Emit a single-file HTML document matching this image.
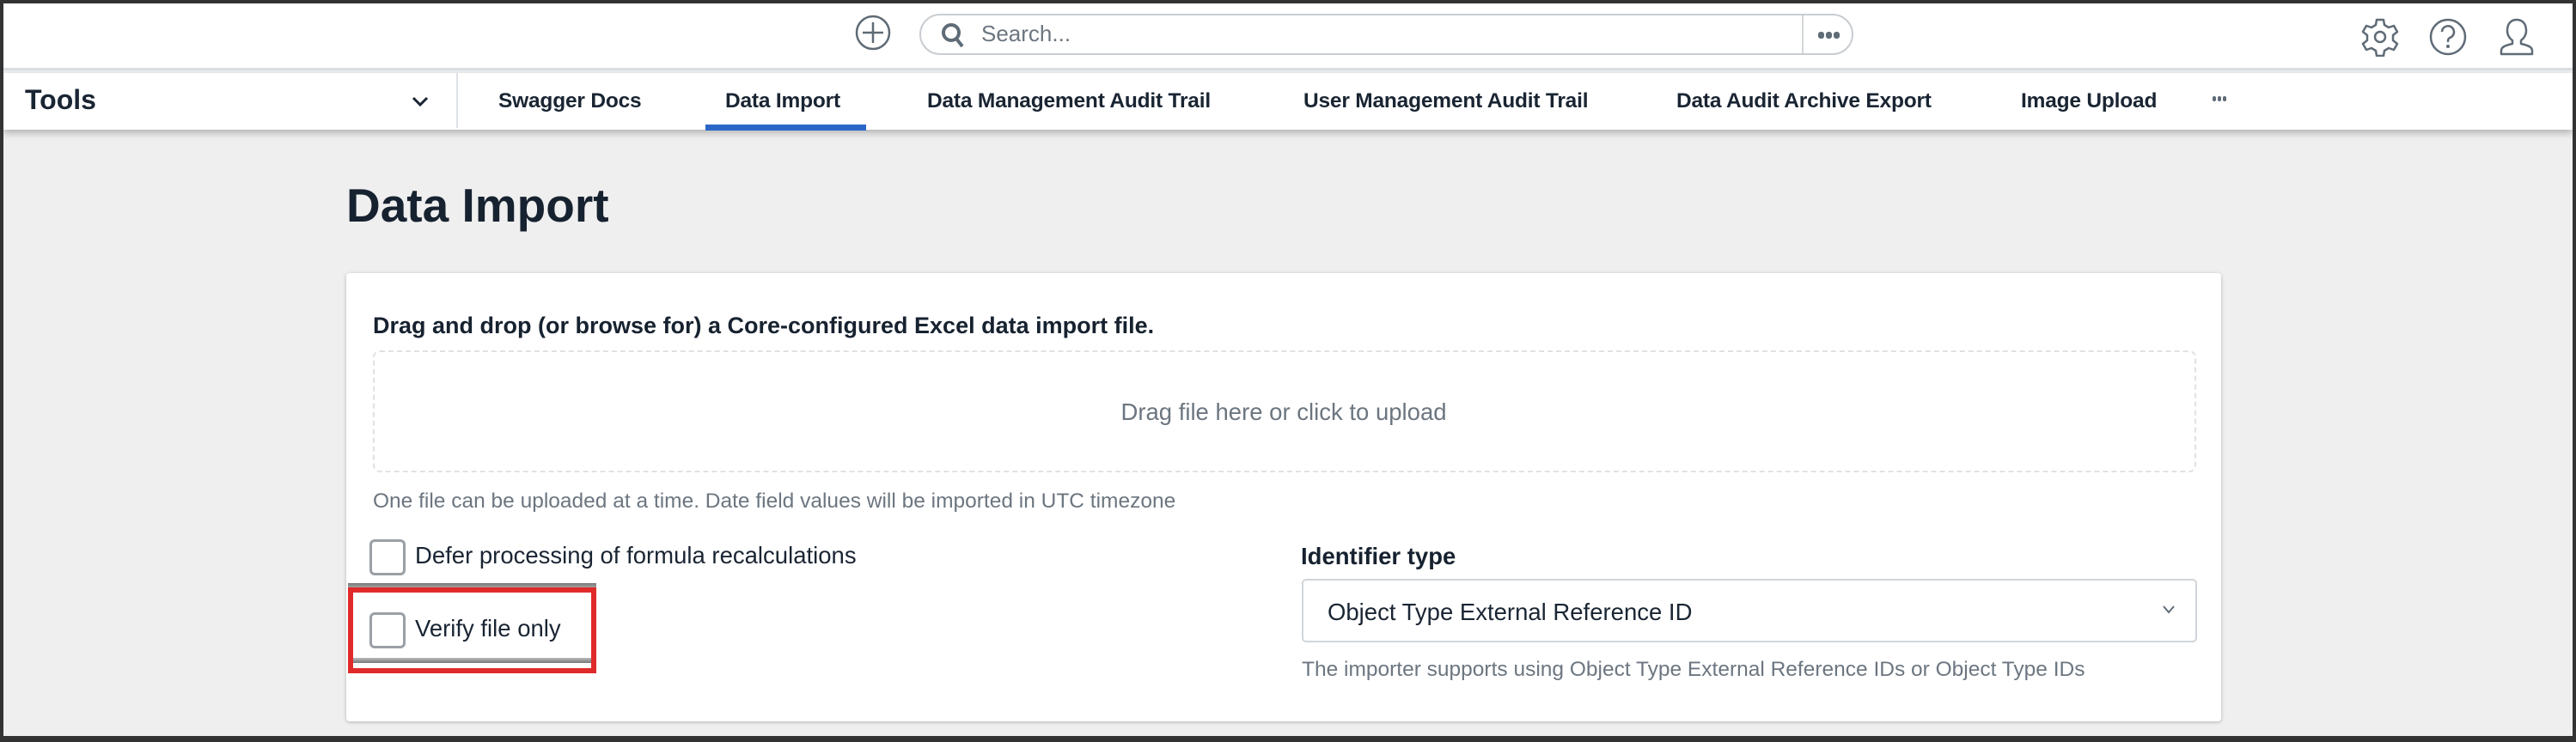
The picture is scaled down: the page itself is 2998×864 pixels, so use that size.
<!DOCTYPE html>
<html><head><meta charset="utf-8"><style>
*{box-sizing:border-box;margin:0;padding:0}
body{width:2998px;height:864px;overflow:hidden;background:#333;font-family:"Liberation Sans",sans-serif;color:#172230;position:relative}
#frame{position:absolute;left:4px;top:4px;width:2990px;height:853px;background:#efefef;overflow:hidden}
#top{position:absolute;left:0;top:0;width:100%;height:78px;background:#fff;border-bottom:3px solid #d9dee3}
#nav{position:absolute;left:0;top:81px;width:100%;height:66px;background:#fff;box-shadow:0 4px 8px rgba(0,0,0,.25)}
.abs{position:absolute}
.tab{position:absolute;top:19px;font-size:24.5px;font-weight:bold;color:#1a2533;letter-spacing:-0.2px}
.card{position:absolute;left:399px;top:314px;width:2182px;height:522px;background:#fff;border-radius:4px;box-shadow:0 1px 4px rgba(0,0,0,.25)}
.cb{position:absolute;width:42px;height:42px;border:3px solid #9aa0a6;border-radius:6px;background:#fff}
.lbl{position:absolute;font-size:27.5px;color:#1a2533}
.help{position:absolute;font-size:24.5px;color:#6c7680}
.dot{position:absolute;width:6px;height:8px;border-radius:3px;background:#5f6b76}
</style></head><body>
<div id="frame">
 <div id="top">
  <svg class="abs" style="left:991px;top:13px" width="42" height="42" viewBox="0 0 42 42"><circle cx="21" cy="21" r="19" fill="none" stroke="#5f6b76" stroke-width="2.5"/><path d="M21 9v24M9 21h24" stroke="#5f6b76" stroke-width="2.5"/></svg>
  <div class="abs" style="left:1066px;top:12px;width:1087px;height:48px;border:2px solid #c9cdd1;border-radius:24px;background:#fff"></div>
  <div class="abs" style="left:2093px;top:14px;width:2px;height:44px;background:#d3d6d9"></div>
  <svg class="abs" style="left:1090px;top:21px" width="30" height="32" viewBox="0 0 30 32"><circle cx="13" cy="13" r="9" fill="none" stroke="#5f6b76" stroke-width="4"/><path d="M19 20l7 9" stroke="#5f6b76" stroke-width="4"/></svg>
  <div class="abs" style="left:1138px;top:20px;font-size:26px;color:#6c7680">Search...</div>
  <div class="dot" style="left:2112px;top:33px;width:7px"></div><div class="dot" style="left:2121px;top:33px;width:7px"></div><div class="dot" style="left:2130px;top:33px;width:7px"></div>
  <svg class="abs" style="left:2744px;top:16px" width="44" height="46" viewBox="0 0 44 46"><path d="M18 3h8l1 6 5 3 6-2 4 7-5 4v6l5 4-4 7-6-2-5 3-1 6h-8l-1-6-5-3-6 2-4-7 5-4v-6l-5-4 4-7 6 2 5-3z" fill="none" stroke="#5f6b76" stroke-width="2.5" stroke-linejoin="round"/><circle cx="22" cy="23" r="6" fill="none" stroke="#5f6b76" stroke-width="2.5"/></svg>
  <svg class="abs" style="left:2822px;top:16px" width="46" height="46" viewBox="0 0 46 46"><circle cx="23" cy="23" r="20" fill="none" stroke="#5f6b76" stroke-width="2.5"/><path d="M16 17a7 7 0 1 1 9 7c-2 1-2 3-2 5" fill="none" stroke="#5f6b76" stroke-width="2.5"/><circle cx="23" cy="34" r="2" fill="#5f6b76"/></svg>
  <svg class="abs" style="left:2902px;top:16px" width="46" height="46" viewBox="0 0 46 46"><path d="M23 3c-8 0-11 6-11 13 0 5 3 9 6 11v4c-9 2-13 4-13 8v4h36v-4c0-4-4-6-13-8v-4c3-2 6-6 6-11 0-7-3-13-11-13z" fill="none" stroke="#5f6b76" stroke-width="2.5" stroke-linejoin="round"/></svg>
 </div>
 <div id="nav">
  <div class="abs" style="left:25px;top:13px;font-size:32px;font-weight:bold;color:#1a2533">Tools</div>
  <svg class="abs" style="left:474px;top:26px" width="22" height="14" viewBox="0 0 22 14"><path d="M3 3l8 8 8-8" fill="none" stroke="#1a2533" stroke-width="3"/></svg>
  <div class="abs" style="left:527px;top:0;width:2px;height:64px;background:#dfe2e5"></div>
  <div class="tab" style="left:576px">Swagger Docs</div>
  <div class="tab" style="left:840px">Data Import</div>
  <div class="abs" style="left:817px;top:60px;width:187px;height:7px;background:#2a66c8"></div>
  <div class="tab" style="left:1075px">Data Management Audit Trail</div>
  <div class="tab" style="left:1513px">User Management Audit Trail</div>
  <div class="tab" style="left:1947px">Data Audit Archive Export</div>
  <div class="tab" style="left:2348px">Image Upload</div>
  <div class="dot" style="left:2571px;top:27px;width:4px;height:6px"></div><div class="dot" style="left:2577px;top:27px;width:4px;height:6px"></div><div class="dot" style="left:2583px;top:27px;width:4px;height:6px"></div>
 </div>
 <div class="abs" style="left:399px;top:203px;font-size:55px;font-weight:bold;color:#172230">Data Import</div>
 <div class="card">
  <div class="abs" style="left:31px;top:46px;font-size:27px;font-weight:bold;color:#172230">Drag and drop (or browse for) a Core-configured Excel data import file.</div>
  <div class="abs" style="left:31px;top:90px;width:2122px;height:142px;border:2px dashed #dfe2e5;border-radius:8px"></div>
  <div class="abs" style="left:0;width:2182px;top:146px;text-align:center;font-size:27.5px;color:#6c7680">Drag file here or click to upload</div>
  <div class="help" style="left:31px;top:252px">One file can be uploaded at a time. Date field values will be imported in UTC timezone</div>
  <div class="cb" style="left:27px;top:310px"></div>
  <div class="lbl" style="left:80px;top:313px">Defer processing of formula recalculations</div>
  <div class="abs" style="left:2px;top:361px;width:289px;height:6px;background:linear-gradient(#777,#aaa)"></div>
  <div class="abs" style="left:2px;top:366px;width:289px;height:100px;border:6px solid #e02a2a;background:#fff"></div>
  <div class="abs" style="left:8px;top:448px;width:277px;height:6px;background:linear-gradient(#bbb,#777)"></div>
  <div class="cb" style="left:27px;top:395px"></div>
  <div class="lbl" style="left:80px;top:398px">Verify file only</div>
  <div class="abs" style="left:1111px;top:314px;font-size:27.5px;font-weight:bold;color:#172230">Identifier type</div>
  <div class="abs" style="left:1112px;top:356px;width:1042px;height:74px;border:2px solid #d1d5d9;border-radius:5px"></div>
  <div class="abs" style="left:1142px;top:379px;font-size:27.5px;color:#1a2533">Object Type External Reference ID</div>
  <svg class="abs" style="left:2113px;top:386px" width="16" height="12" viewBox="0 0 16 12"><path d="M2 2l6 7 6-7" fill="none" stroke="#5f6b76" stroke-width="2"/></svg>
  <div class="help" style="left:1112px;top:448px">The importer supports using Object Type External Reference IDs or Object Type IDs</div>
 </div>
</div>
</body></html>
